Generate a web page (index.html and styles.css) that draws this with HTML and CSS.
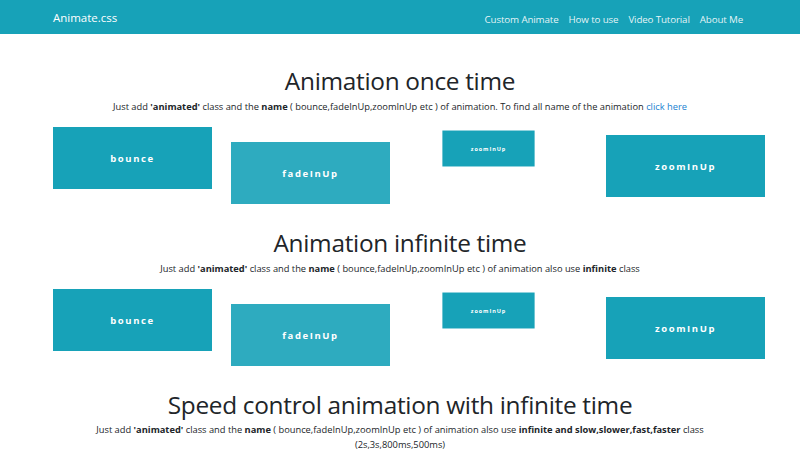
FILE: index.html
```html
<!DOCTYPE html>
<html>
<head>
<meta charset="utf-8">
<link rel="stylesheet" href="styles.css">
</head>
<body>
<nav class="navbar">
  <a class="brand" href="#">Animate.css</a>
  <ul class="nav-links">
    <li><a href="#">Custom Animate</a></li>
    <li><a href="#">How to use</a></li>
    <li><a href="#">Video Tutorial</a></li>
    <li><a href="#">About Me</a></li>
  </ul>
</nav>
<main class="content">
  <section class="demo first">
    <h2>Animation once time</h2>
    <p class="desc">Just add <b>'animated'</b> class and the <b>name</b> ( bounce,fadeInUp,zoomInUp etc ) of animation. To find all name of the animation <a href="#">click here</a></p>
    <div class="boxes">
      <div class="box bounce">bounce</div>
      <div class="box fade">fadeInUp</div>
      <div class="box zoom-small">zoomInUp</div>
      <div class="box zoom-large">zoomInUp</div>
    </div>
  </section>
  <section class="demo">
    <h2>Animation infinite time</h2>
    <p class="desc">Just add <b>'animated'</b> class and the <b>name</b> ( bounce,fadeInUp,zoomInUp etc ) of animation also use <b>infinite</b> class</p>
    <div class="boxes">
      <div class="box bounce">bounce</div>
      <div class="box fade">fadeInUp</div>
      <div class="box zoom-small">zoomInUp</div>
      <div class="box zoom-large">zoomInUp</div>
    </div>
  </section>
  <section class="demo">
    <h2>Speed control animation with infinite time</h2>
    <p class="desc wide">Just add <b>'animated'</b> class and the <b>name</b> ( bounce,fadeInUp,zoomInUp etc ) of animation also use <b>infinite and slow,slower,fast,faster</b> class<br>(2s,3s,800ms,500ms)</p>
  </section>
</main>
</body>
</html>
```

FILE: styles.css
```css
* { box-sizing: border-box; }
html, body { margin: 0; padding: 0; }
body {
  font-family: "Open Sans", "Noto Sans", sans-serif;
  color: #212529;
  background: #fff;
  overflow: hidden;
  height: 450px;
}
.navbar {
  height: 34px;
  background: #17a2b8;
  display: flex;
  align-items: center;
  justify-content: space-between;
  padding: 0 57px 0 53px;
}
.brand {
  color: #fff;
  font-size: 11.5px;
  text-decoration: none;
}
.nav-links {
  list-style: none;
  display: flex;
  gap: 10px;
  margin: 0;
  padding: 0;
}
.nav-links a {
  color: rgba(255,255,255,0.9);
  text-decoration: none;
  font-size: 9.8px;
  letter-spacing: -0.15px;
}
.content {
  padding: 31px 40px 0;
}
.demo h2 {
  margin: 0;
  text-align: center;
  font-weight: 400;
  font-size: 24.4px;
  line-height: 32px;
  letter-spacing: -0.3px;
}
.demo + .demo h2 { margin-top: 38px; }
.desc {
  margin: 3px auto 13px;
  text-align: center;
  font-size: 9.3px;
  line-height: 14px;
  max-width: 640px;
}
.desc.wide { line-height: 14.5px; margin-top: 2px; }
.desc b { font-weight: 700; }
.desc a { color: #1a7fd0; text-decoration: none; }
.boxes {
  display: grid;
  grid-template-columns: 159px 159px 159px 159px;
  column-gap: 19px;
  height: 62px;
  padding-left: 13px;
}
.box {
  width: 159px;
  height: 62px;
  background: #17a2b8;
  color: #fff;
  display: flex;
  align-items: center;
  justify-content: center;
  font-weight: 700;
  font-size: 9.5px;
  letter-spacing: 1.6px;
}
.fade {
  background: #2eabbf;
  transform: translateY(15px);
}
.zoom-small {
  transform: translateY(-9.5px) scale(0.58);
}
.zoom-large {
  margin-left: 19px;
  transform: translateY(8px);
}
```
